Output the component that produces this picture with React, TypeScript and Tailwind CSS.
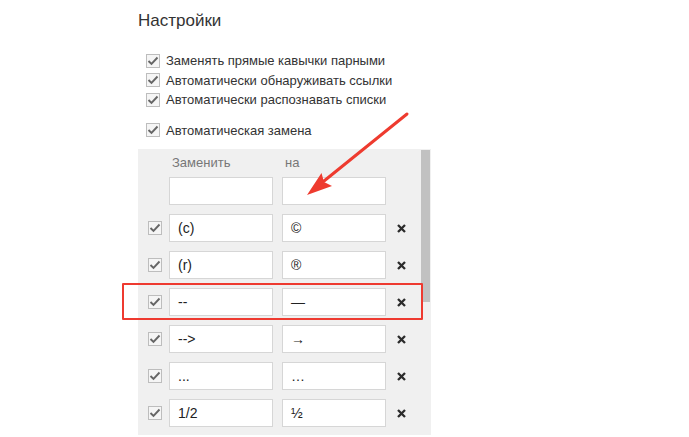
import React from "react"

const options = [
    "Заменять прямые кавычки парными",
    "Автоматически обнаруживать ссылки",
    "Автоматически распознавать списки",
]

const rules = [
    { from: "(c)", to: "©" },
    { from: "(r)", to: "®" },
    { from: "--", to: "—" },
    { from: "-->", to: "→" },
    { from: "...", to: "…" },
    { from: "1/2", to: "½" },
]

function Check({ className = "" }: { className?: string }) {
    return (
        <span className={"flex items-center justify-center w-[14px] h-[14px] border border-[#bdbdbd] bg-[#f5f5f5] shrink-0 " + className}>
            <svg width="12" height="12" viewBox="0 0 12 12">
                <polyline points="1.5,6 4.5,9 10.5,2.5" fill="none" stroke="#666" strokeWidth="1.9" />
            </svg>
        </span>
    )
}

function Cross() {
    return (
        <svg width="9" height="9" viewBox="0 0 9 9">
            <path d="M1 1 L8 8 M8 1 L1 8" stroke="#2b2b2b" strokeWidth="2.3" />
        </svg>
    )
}

export default function App() {
    return (
        <div className="relative min-h-screen h-[437px] overflow-hidden bg-white font-['Liberation_Sans',Arial,sans-serif]">
            <div className="pl-[138px] pt-[11px]">
                <h1 className="text-[17px] leading-[20px] text-[#333]">Настройки</h1>

                <div className="mt-[20px] pl-[8px] flex flex-col">
                    {options.map((o) => (
                        <label key={o} className="flex items-center h-[19.5px] gap-[6px] text-[13px] text-[#333]">
                            <Check />
                            <span>{o}</span>
                        </label>
                    ))}
                    <label className="mt-[11px] flex items-center h-[19.5px] gap-[6px] text-[13px] text-[#333]">
                        <Check />
                        <span>Автоматическая замена</span>
                    </label>
                </div>

                <div className="mt-[9px] w-[293px] h-[286px] bg-[#f0f0f0] flex">
                    <div className="w-[283px] pt-[6px] pl-[10px]">
                        <div className="flex h-[16px] text-[13px] leading-[16px] text-[#777]">
                            <span className="ml-[24px] w-[113px]">Заменить</span>
                            <span>на</span>
                        </div>
                        <div className="mt-[6px] flex flex-col gap-[9px]">
                            <div className="flex items-center">
                                <span className="w-[13px]" />
                                <div className="ml-[8px] w-[104px] h-[28px] bg-white border border-[#d6d6d6]" />
                                <div className="ml-[9px] w-[104px] h-[28px] bg-white border border-[#d6d6d6]" />
                            </div>
                            {rules.map((r) => (
                                <div key={r.from} className="flex items-center">
                                    <Check className="-mr-[1px]" />
                                    <div className="ml-[8px] w-[104px] h-[28px] bg-white border border-[#d6d6d6] pl-[8px] flex items-center text-[14px] text-[#222]">
                                        {r.from}
                                    </div>
                                    <div className="ml-[9px] w-[104px] h-[28px] bg-white border border-[#d6d6d6] pl-[8px] flex items-center text-[14px] text-[#222]">
                                        {r.to}
                                    </div>
                                    <div className="w-[30px] flex justify-center">
                                        <Cross />
                                    </div>
                                </div>
                            ))}
                        </div>
                    </div>
                    <div className="w-[10px] pt-[1px]">
                        <div className="w-[9px] h-[152px] bg-[#c1c1c1]" />
                    </div>
                </div>
            </div>

            <div className="absolute left-[122px] top-[283px] w-[301px] h-[37px] border-2 border-[#ee3a30] rounded-[1px]" />

            <svg className="absolute left-0 top-0" width="689" height="437" viewBox="0 0 689 437">
                <line x1="407" y1="114" x2="324" y2="181" stroke="#ee3b2f" strokeWidth="3" strokeLinecap="round" />
                <polygon points="307,195 321.5,173 324,182 332,186" fill="#ee3b2f" />
            </svg>
        </div>
    )
}
